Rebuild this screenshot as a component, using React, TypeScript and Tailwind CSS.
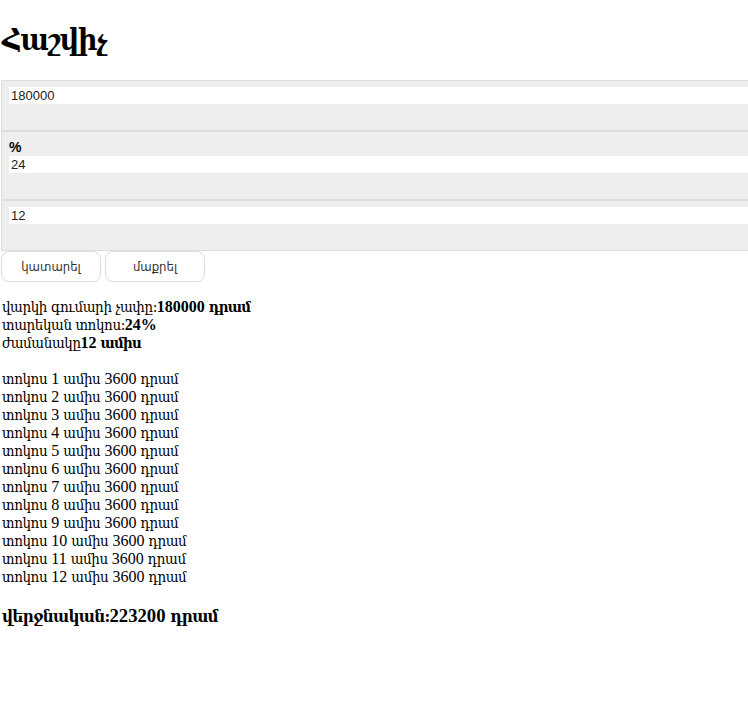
import React from "react";

const months = Array.from({ length: 12 }, (_, i) => i + 1);

function A({ children }: { children: React.ReactNode }) {
  return (
    <span className="font-['DejaVu_Serif_Condensed','DejaVu_Serif',serif] text-[15px] tracking-[-0.4px]">{children}</span>
  );
}

function AB({ children }: { children: React.ReactNode }) {
  return (
    <span className="font-['DejaVu_Serif_Condensed','DejaVu_Serif',serif] text-[15px] tracking-[-0.8px] font-bold">{children}</span>
  );
}

const sans = "font-['Liberation_Sans','DejaVu_Sans_Condensed',sans-serif]";

export default function App() {
  return (
    <div className="w-full overflow-x-hidden bg-white text-black font-['Liberation_Serif',serif]">
      <h1 className="mt-[21.44px] mb-[21.44px] h-[37px] pl-[2px] text-[30px] leading-[37px] font-bold tracking-[-1.3px] font-['DejaVu_Serif_Condensed','DejaVu_Serif',serif]">
        Հաշվիչ
      </h1>

      <div className="w-[900px] ml-px">
        <div className="border border-[#dddddd] bg-[#eeeeee] pl-[7px] pt-[6px] pb-[26px]">
          <div className={`h-[17px] bg-white px-[2px] text-[13px] leading-[17px] text-[#222] ${sans}`}>180000</div>
        </div>
        <div className="border border-[#dddddd] bg-[#eeeeee] pl-[7px] pt-[6px] pb-[26px]">
          <div className={`text-[14px] leading-[18px] font-bold ${sans}`}>%</div>
          <div className={`h-[17px] bg-white px-[2px] text-[13px] leading-[17px] text-[#222] ${sans}`}>24</div>
        </div>
        <div className="border border-[#dddddd] bg-[#eeeeee] pl-[7px] pt-[6px] pb-[26px]">
          <div className={`h-[17px] bg-white px-[2px] text-[13px] leading-[17px] text-[#222] ${sans}`}>12</div>
        </div>
      </div>

      <div className="flex gap-[4px] ml-px">
        <button className={`h-[31px] w-[100px] rounded-[8px] border border-[#dddddd] bg-white text-[13px] text-[#333] ${sans}`}>կատարել</button>
        <button className={`h-[31px] w-[100px] rounded-[8px] border border-[#dddddd] bg-white text-[13px] text-[#333] ${sans}`}>մաքրել</button>
      </div>

      <div className="mt-[16px] pl-[2px] text-[16px] leading-[18px]">
        <div className="h-[18px] whitespace-nowrap">
          <A>վարկի գումարի չափը:</A>
          <b>180000 </b>
          <AB>դրամ</AB>
        </div>
        <div className="h-[18px] whitespace-nowrap">
          <A>տարեկան տոկոս:</A>
          <b>24%</b>
        </div>
        <div className="h-[18px] whitespace-nowrap">
          <A>ժամանակը</A>
          <b>12 </b>
          <AB>ամիս</AB>
        </div>
        <div className="h-[18px]" />
        {months.map((m) => (
          <div key={m} className="h-[18px] whitespace-nowrap">
            <A>տոկոս</A> {m} <A>ամիս</A> 3600 <A>դրամ</A>
          </div>
        ))}
      </div>
      <h3 className="mt-[18.72px] h-[22px] pl-[2px] text-[18.72px] leading-[22px] font-bold whitespace-nowrap">
        <span className="font-['DejaVu_Serif_Condensed','DejaVu_Serif',serif] text-[17px] tracking-[-0.7px]">վերջնական:</span>
        223200{" "}
        <span className="font-['DejaVu_Serif_Condensed','DejaVu_Serif',serif] text-[17px] tracking-[-0.7px]">դրամ</span>
      </h3>
      <div className="h-[80px]" />
    </div>
  );
}
